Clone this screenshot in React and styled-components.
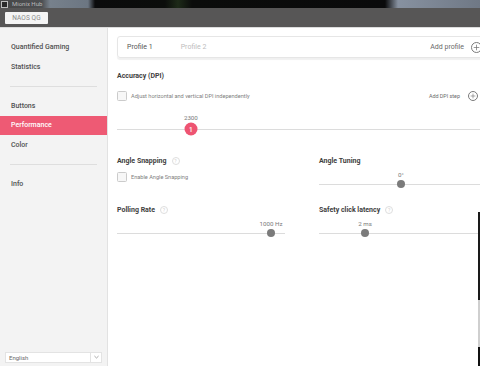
import React from "react";
import styled, { createGlobalStyle } from "styled-components";

const GlobalStyle = createGlobalStyle`
  html, body { margin: 0; padding: 0; background: #ffffff; overflow: hidden; }
  body { font-family: Roboto, "Open Sans", "Liberation Sans", sans-serif; color: #3c3c3c; }
  * { box-sizing: border-box; }
`;

const Window = styled.div`
  position: relative;
  width: 480px;
  height: 366px;
  display: flex;
  flex-direction: column;
  overflow: hidden;
`;

const TitleBar = styled.div`
  height: 8px;
  flex: none;
  display: flex;
  align-items: center;
  gap: 4px;
  padding-left: 1px;
  background: linear-gradient(
    90deg,
    #474747 0px,
    #4d4f52 42px,
    #77818c 50px,
    #6c7682 88px,
    #0b0b0c 95px,
    #0b0d0b 165px,
    #1d2a18 178px,
    #0b0c0b 192px,
    #0a0a0b 385px,
    #8791a0 398px,
    #6f7885 480px
  );
`;

const AppIcon = styled.div`
  width: 7px;
  height: 7px;
  border: 1px solid #bdbdbd;
  background: #2a2a2a;
`;

const TitleText = styled.span`
  font-size: 6px;
  line-height: 8px;
  color: #b9b9b9;
`;

const Toolbar = styled.div`
  height: 20px;
  flex: none;
  display: flex;
  align-items: center;
  padding-left: 5px;
  background: #575656;
  border-bottom: 1px solid #dcdcdc;
`;

const DeviceButton = styled.div`
  width: 43px;
  height: 12px;
  background: #f4f4f4;
  border-radius: 1px;
  font-size: 6.5px;
  line-height: 12px;
  text-align: center;
  color: #8a8a8a;
  letter-spacing: 0.1px;
`;

const Body = styled.div`
  flex: 1;
  display: flex;
  min-height: 0;
`;

const Sidebar = styled.nav`
  width: 108px;
  flex: none;
  background: #f3f3f3;
  border-right: 1px solid #e2e2e2;
  display: flex;
  flex-direction: column;
  padding-top: 9.5px;
`;

const NavItem = styled.div`
  height: 19.5px;
  display: flex;
  align-items: center;
  padding-left: 11px;
  font-size: 7px;
  font-weight: 500;
  color: ${(p) => (p.$active ? "#ffffff" : "#505050")};
  background: ${(p) => (p.$active ? "#ee5a74" : "transparent")};
`;

const NavDivider = styled.div`
  height: 19.5px;
  display: flex;
  align-items: center;
  padding: 0 10px;
  &::after {
    content: "";
    flex: 1;
    height: 1px;
    background: #dedede;
  }
`;

const Spacer = styled.div`
  flex: 1;
`;

const LangSelect = styled.div`
  margin: 0 5px 3.5px 5px;
  height: 11px;
  display: flex;
  background: #ffffff;
  border: 1px solid #e3e3e3;
`;

const LangText = styled.span`
  flex: 1;
  padding-left: 3px;
  font-size: 6px;
  line-height: 9px;
  color: #6a6a6a;
`;

const LangArrow = styled.span`
  width: 11px;
  border-left: 1px solid #e3e3e3;
  display: flex;
  align-items: center;
  justify-content: center;
`;

const Main = styled.main`
  flex: 1;
  overflow: hidden;
  background: #ffffff;
  padding: 8px 0 0 9px;
`;

const Content = styled.div`
  width: 375px;
  display: flex;
  flex-direction: column;
`;

const ProfileCard = styled.div`
  height: 22px;
  display: flex;
  align-items: center;
  padding: 0 9px 0 9px;
  border: 1px solid #e6e6e6;
  border-radius: 3px;
  box-shadow: 0 2px 1px rgba(0, 0, 0, 0.06);
`;

const ProfileTab = styled.span`
  font-size: 7px;
  color: ${(p) => (p.$active ? "#555555" : "#bdbdbd")};
  margin-right: 28px;
`;

const AddAction = styled.div`
  margin-left: auto;
  display: flex;
  align-items: center;
  gap: ${(p) => (p.$small ? "8px" : "7px")};
  font-size: ${(p) => (p.$small ? "5.4px" : "7px")};
  color: #6a6a6a;
`;

const PlusCircle = styled.span`
  width: ${(p) => p.$size}px;
  height: ${(p) => p.$size}px;
  border: 1px solid #7a7a7a;
  border-radius: 50%;
  display: flex;
  align-items: center;
  justify-content: center;
`;

const SectionTitle = styled.div`
  height: 10px;
  display: flex;
  align-items: center;
  gap: 5px;
  font-size: 7px;
  font-weight: 700;
  color: #404040;
  margin-top: ${(p) => p.$mt || 0}px;
`;

const Help = styled.span`
  width: 8px;
  height: 8px;
  border: 1px solid #dedede;
  border-radius: 50%;
  font-size: 5px;
  font-weight: 400;
  color: #cfcfcf;
  display: flex;
  align-items: center;
  justify-content: center;
`;

const CheckRow = styled.div`
  display: flex;
  align-items: center;
  gap: 4px;
  margin-top: ${(p) => p.$mt || 0}px;
  padding-right: ${(p) => p.$pr || 0}px;
`;

const Box = styled.span`
  width: 10px;
  height: 10px;
  flex: none;
  border: 1px solid #cbcbcb;
  border-radius: 1.5px;
  background: #f7f7f7;
`;

const CheckLabel = styled.span`
  font-size: 5.6px;
  color: #808080;
`;

const SliderField = styled.div`
  display: flex;
  flex-direction: column;
  margin-top: ${(p) => p.$mt || 0}px;
`;

const ValueRow = styled.div`
  position: relative;
  height: 8px;
  margin-bottom: ${(p) => p.$gap || 0}px;
`;

const ValueLabel = styled.span`
  position: absolute;
  top: 0;
  transform: translateX(-50%);
  font-size: 6.2px;
  line-height: 8px;
  color: #7a7a7a;
  white-space: nowrap;
`;

const Track = styled.div`
  position: relative;
  height: ${(p) => p.$h}px;
  &::before {
    content: "";
    position: absolute;
    left: 0;
    right: 0;
    top: 50%;
    height: 1px;
    background: #dcdcdc;
  }
`;

const Thumb = styled.span`
  position: absolute;
  top: 50%;
  width: 8px;
  height: 8px;
  border-radius: 50%;
  background: #7b7b7b;
  transform: translate(-50%, -50%);
`;

const StepThumb = styled.span`
  position: absolute;
  top: 50%;
  width: 13px;
  height: 13px;
  border-radius: 50%;
  background: #ee5472;
  transform: translate(-50%, -50%);
  color: #ffffff;
  font-size: 6.5px;
  font-weight: 500;
  display: flex;
  align-items: center;
  justify-content: center;
`;

const Columns = styled.div`
  display: grid;
  grid-template-columns: 168px 168px;
  column-gap: 34px;
  row-gap: 17px;
  margin-top: 20px;
  align-items: start;
`;

const Column = styled.div`
  display: flex;
  flex-direction: column;
`;

const EdgeLine = styled.div`
  position: absolute;
  right: 0;
  top: 212px;
  bottom: 0;
  width: 2px;
  background: linear-gradient(
    180deg,
    #1a1a1a 0px,
    #1a1a1a 88px,
    #cfcfcf 88px,
    #cfcfcf 135px,
    #111111 135px
  );
`;

const Plus = ({ size }) => (
  <PlusCircle $size={size}>
    <svg width={size - 4} height={size - 4} viewBox="0 0 10 10">
      <path d="M5 1v8M1 5h8" stroke="#6e6e6e" strokeWidth="1" />
    </svg>
  </PlusCircle>
);

const Slider = ({ value, pct, mt }) => (
  <SliderField $mt={mt}>
    <ValueRow $gap={1}>
      <ValueLabel style={{ left: `${pct}%` }}>{value}</ValueLabel>
    </ValueRow>
    <Track $h={8}>
      <Thumb style={{ left: `${pct}%` }} />
    </Track>
  </SliderField>
);

export default function App() {
  return (
    <>
      <GlobalStyle />
      <Window>
        <TitleBar>
          <AppIcon />
          <TitleText>Mionix Hub</TitleText>
        </TitleBar>
        <Toolbar>
          <DeviceButton>NAOS QG</DeviceButton>
        </Toolbar>
        <Body>
          <Sidebar>
            <NavItem>Quantified Gaming</NavItem>
            <NavItem>Statistics</NavItem>
            <NavDivider />
            <NavItem>Buttons</NavItem>
            <NavItem $active>Performance</NavItem>
            <NavItem>Color</NavItem>
            <NavDivider />
            <NavItem>Info</NavItem>
            <Spacer />
            <LangSelect>
              <LangText>English</LangText>
              <LangArrow>
                <svg width="5" height="4" viewBox="0 0 6 4">
                  <path d="M0.5 0.8L3 3.2L5.5 0.8" fill="none" stroke="#8a8a8a" strokeWidth="0.9" />
                </svg>
              </LangArrow>
            </LangSelect>
          </Sidebar>
          <Main>
            <Content>
              <ProfileCard>
                <ProfileTab $active>Profile 1</ProfileTab>
                <ProfileTab>Profile 2</ProfileTab>
                <AddAction>
                  Add profile
                  <Plus size={11} />
                </AddAction>
              </ProfileCard>

              <SectionTitle $mt={13}>Accuracy (DPI)</SectionTitle>
              <CheckRow $mt={10} $pr={14}>
                <Box />
                <CheckLabel>Adjust horizontal and vertical DPI independently</CheckLabel>
                <AddAction $small>
                  Add DPI step
                  <Plus size={10} />
                </AddAction>
              </CheckRow>

              <SliderField $mt={13}>
                <ValueRow>
                  <ValueLabel style={{ left: "19.7%" }}>2300</ValueLabel>
                </ValueRow>
                <Track $h={14}>
                  <StepThumb style={{ left: "19.7%" }}>1</StepThumb>
                </Track>
              </SliderField>

              <Columns>
                <Column>
                  <SectionTitle>
                    Angle Snapping <Help>?</Help>
                  </SectionTitle>
                  <CheckRow $mt={6}>
                    <Box />
                    <CheckLabel>Enable Angle Snapping</CheckLabel>
                  </CheckRow>
                </Column>
                <Column>
                  <SectionTitle>Angle Tuning</SectionTitle>
                  <Slider value="0°" pct={48.8} mt={5} />
                </Column>
                <Column>
                  <SectionTitle>
                    Polling Rate <Help>?</Help>
                  </SectionTitle>
                  <Slider value="1000 Hz" pct={91.7} mt={5} />
                </Column>
                <Column>
                  <SectionTitle>
                    Safety click latency <Help>?</Help>
                  </SectionTitle>
                  <Slider value="2 ms" pct={27.4} mt={5} />
                </Column>
              </Columns>
            </Content>
          </Main>
        </Body>
        <EdgeLine />
      </Window>
    </>
  );
}
